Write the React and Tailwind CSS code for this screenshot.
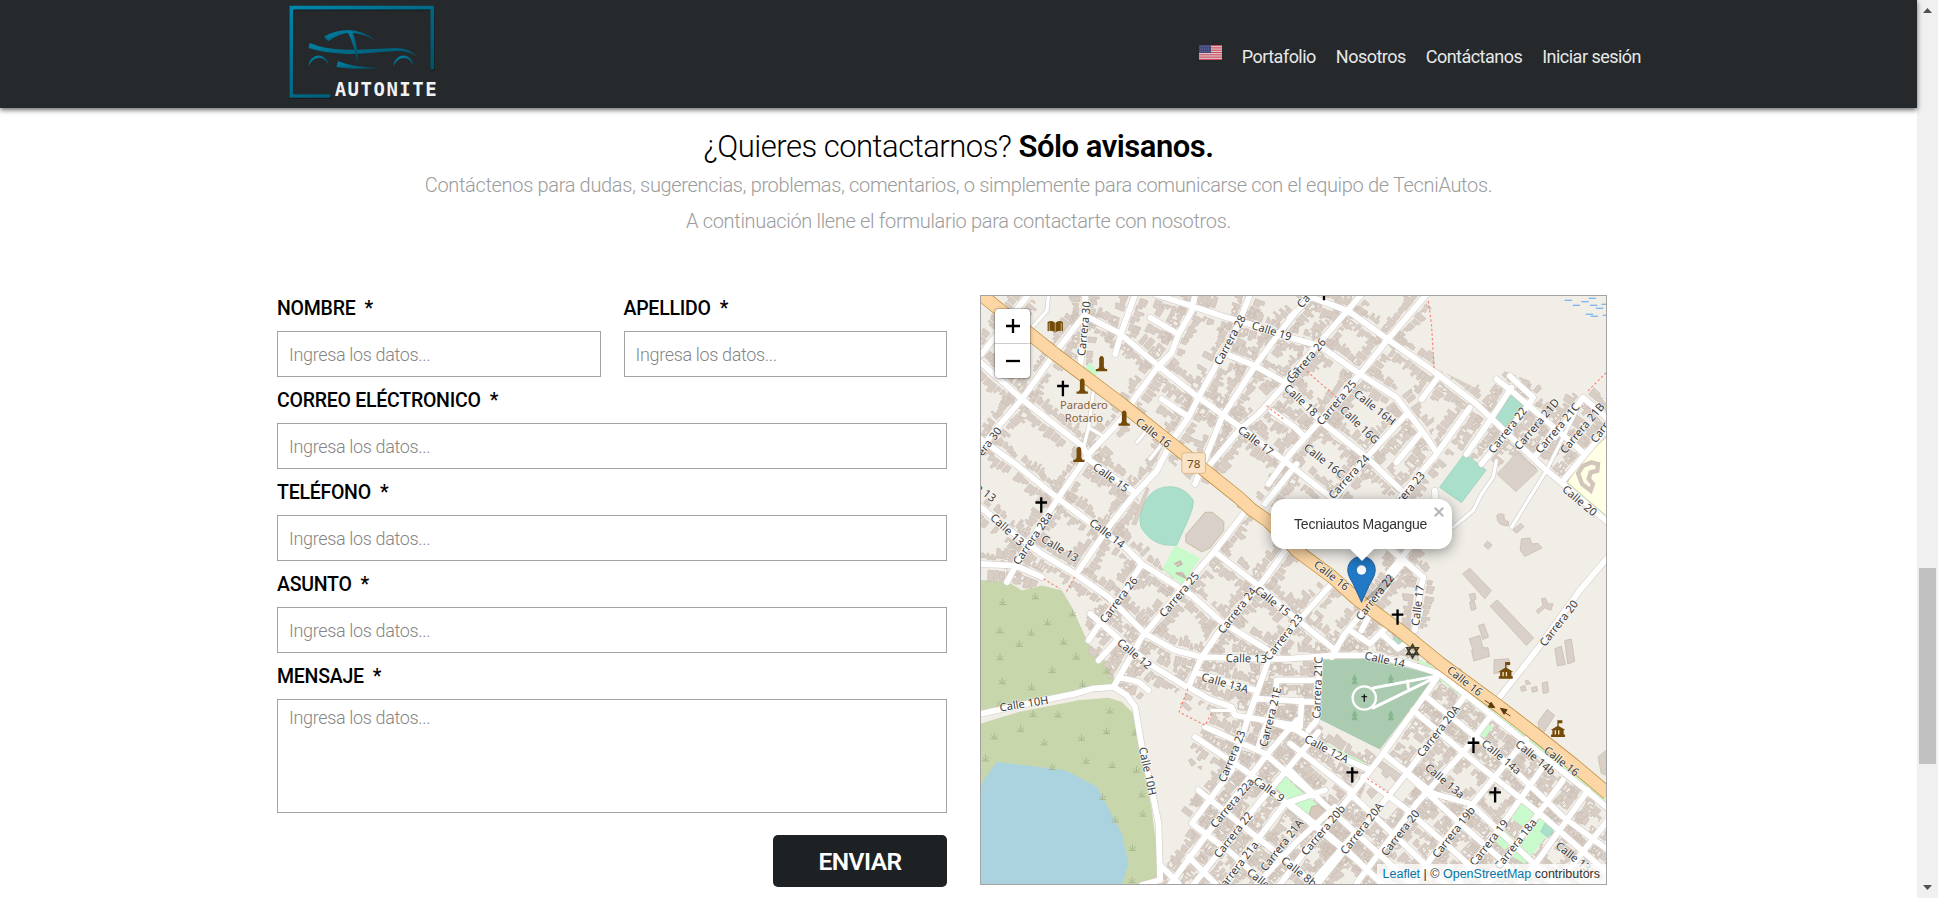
import React from "react";

const streets = [
  "M160 10L18 190", "M325 75L240 185L140 325L75 400L10 480", "M330 10L325 130L315 225",
  "M330 75L430 125L550 225L670 320L790 405L935 515L1055 610L1120 660",
  "M480 10L440 120L420 190", "M660 10L650 60L610 130L590 185L550 225L480 320L440 385L340 490L250 620L140 790L95 875",
  "M525 80L610 130", "M540 10L650 45L740 75L860 110L945 140L1035 165L1155 250L1265 320L1345 425L1385 485",
  "M825 10L790 100L725 220L670 320L640 380L590 450L545 540L470 620L400 710L310 840",
  "M965 60L910 130L840 225L740 380L660 580", "M755 190L840 225L930 275", "M940 270L850 370L790 420L690 540",
  "M560 325L635 375", "M890 360L960 410L990 440", "M945 290L1035 390L1175 500L1275 595", "M10 210L140 325L320 465L345 510L480 605",
  "M10 440L120 520L250 625L350 700L450 770L500 820L610 890L650 915L740 995L880 1080",
  "M10 645L90 710L200 790L300 850L400 920L510 1030L600 1080L680 1100L870 1105L945 1105L1075 1095L1195 1095L1285 1115L1395 1150",
  "M10 820L120 825L200 860", "M820 650L720 780L625 890L500 1040L415 1190", "M500 820L450 900L380 990L340 1050",
  "M720 785L850 885L945 970L1075 1075", "M960 740L850 890L745 1005L680 1100L640 1190",
  "M1070 880L945 1020L880 1110L845 1210L820 1280L770 1440L650 1600", "M345 970L430 1045L530 1125L635 1190", "M430 1045L370 1110",
  "M430 1160L490 1175L520 1200", "M660 1145L740 1170L840 1200", "M640 1190L700 1225L770 1250L780 1275L840 1285L960 1305",
  "M845 1225L1015 1235", "M905 1170L1025 1170", "M905 1170L900 1230L850 1370", "M690 1310L870 1390L960 1470L1010 1510",
  "M660 1340L830 1455L960 1560L1145 1710L1230 1790", "M670 1500L850 1645L960 1730L1020 1790", "M650 1600L770 1690L880 1790", "M560 1730L610 1780", "M640 1700L730 1790",
  "M965 1290L870 1400L690 1640L580 1790", "M1030 1325L960 1410L850 1540L650 1790", "M1050 1500L930 1540L850 1645L740 1790", "M1080 1550L960 1660L840 1790", "M1140 1630L1000 1790",
  "M1385 1165L1225 1390L1125 1520L985 1690L910 1790", "M1475 1210L1295 1450L1030 1780", "M1545 1280L1470 1380L1325 1540L1145 1780",
  "M1655 1345L1495 1540L1365 1710L1310 1790", "M1705 1430L1585 1600L1440 1790", "M1840 1500L1705 1690L1630 1790", "M1900 1590L1765 1760", "M1765 1470L1625 1660L1530 1790",
  "M1395 1150L1545 1270L1835 1500L1900 1555", "M1355 1220L1565 1390L1765 1580L1900 1680", "M1315 1260L1505 1420L1695 1570L1900 1750",
  "M1225 1390L1375 1510L1485 1540L1645 1690L1740 1780", "M1295 1450L1445 1590L1570 1700L1660 1790", "M1165 1460L1285 1550L1445 1690L1550 1790", "M1125 1510L1295 1670L1420 1790", "M945 1360L1125 1500",
  "M945 1440L1045 1540L1265 1740L1320 1790", "M945 1540L1115 1680L1220 1780", "M885 1295L965 1320L1095 1400L1185 1440",
  "M1290 810L1110 1030L1070 1100", "M1125 1020L1185 1060L1235 1010", "M1190 960L1160 1020", "M1220 1030L1270 1075L1320 1040", "M1240 770L1345 860L1335 910L1320 1020",
  "M980 1230L975 1310", "M1035 1110L1025 1290L1000 1320", "M1355 10L1235 150L1155 250L1035 390L945 490L880 580", "M1160 10L1025 165L930 275",
  "M985 10L1120 60L1245 150L1375 240L1505 340L1705 530L1765 580L1900 695", "M1015 10L945 80", "M1385 265L1340 325", "M1295 370L1175 500L1065 640",
  "M1335 430L1265 515", "M1485 350L1385 490L1275 620", "M1610 290L1545 390L1475 490", "M1565 265L1610 300L1830 490", "M1605 255L1675 320L1660 345L1520 520",
  "M1735 420L1680 500", "M1900 410L1765 570", "M1825 320L1900 385", "M1825 320L1740 440", "M965 520L870 640", "M1330 740L1240 850",
];
const plainRoads = [
  "M10 1272L130 1245L300 1210L350 1195L415 1190L455 1215L480 1250L500 1370L530 1500L550 1600L555 1770L500 1785",
  "M1900 800L1815 900L1685 1080L1575 1220", "M1380 600L1382 650",
];
const lanes = [
  "M220 10L215 60L165 115", "M355 300L340 410L325 470", "M340 410L390 440", "M525 505L560 460", "M485 455L510 425",
  "M1825 320L1715 540L1610 710", "M1565 510L1555 560L1520 610L1495 660L1435 710", "M710 1260L770 1260",
];

function makeBuildings() {
  let seed = 7919;
  const rnd = () => ((seed = (seed * 16807) % 2147483647) / 2147483647);
  const out = [];
  streets.forEach((d) => {
    const p = d.slice(1).split("L").map((s) => s.split(" ").map(Number));
    for (let i = 1; i < p.length; i++) {
      const [x0, y0] = p[i - 1];
      const dx = p[i][0] - x0;
      const dy = p[i][1] - y0;
      const len = Math.hypot(dx, dy);
      const ux = dx / len;
      const uy = dy / len;
      for (const side of [-1, 1]) {
        let t = 6;
        while (t < len - 14) {
          const w = 9 + rnd() * 12;
          if (rnd() > 0.12) {
            const near = 14 + rnd() * 6;
            const far = near + 12 + rnd() * 22;
            const pt = (a, b) => (x0 + ux * a - uy * b * side).toFixed(0) + " " + (y0 + uy * a + ux * b * side).toFixed(0);
            const q = far - rnd() * 12;
            out.push("M" + pt(t, near) + "L" + pt(t + w, near) + "L" + pt(t + w, q) + "L" + pt(t + w / 2, q) + "L" + pt(t + w / 2, far) + "L" + pt(t, far) + "Z");
          }
          t += w + 2 + rnd() * 3;
        }
      }
    }
  });
  return out.join("");
}
const buildings = makeBuildings();

const labels = [
  ["Carrera 30", 326, 113, -84], ["Calle 19", 890, 120, 17], ["Carrera 28", 764, 147, -62], ["Calle 16", 535, 426, 38], ["Calle 17", 842, 450, 37],
  ["Calle 15", 407, 560, 36], ["Calle 14", 396, 728, 37], ["Calle 13", 96, 717, 43], ["Calle 13", 254, 773, 31], ["Carrera 28a", 172, 743, -56],
  ["era 30", 42, 452, -52], ["a 13", 32, 606, 38], ["Ca", 955, 245, -50], ["Calle 18", 978, 328, 43], ["Carrera 26", 993, 210, -50], ["Ca", 985, 30, -50],
  ["Carrera 25", 1084, 335, -50], ["Calle 16H", 1200, 350, 38], ["Calle 16G", 1154, 402, 44], ["Calle 16C", 1048, 510, 38], ["Carrera 24", 1122, 558, -48],
  ["Carrera 23", 1290, 610, -50], ["Carrera 22", 1598, 418, -52], ["Carrera 21D", 1686, 400, -50], ["Carrera 21C", 1748, 412, -50], ["Carrera 21B", 1822, 412, -50],
  ["Carrera", 1890, 405, -53], ["Calle 20", 1815, 630, 40], ["Calle 16", 1070, 855, 38], ["Carrera 22", 1200, 920, -52], ["Calle 17", 1328, 945, -83],
  ["Carrera 26", 430, 928, -53], ["Carrera 25", 612, 912, -50], ["Carrera 24", 786, 960, -52], ["Calle 15", 893, 932, 38], ["Carrera 23", 925, 1040, -52],
  ["Calle 12", 478, 1090, 40], ["Calle 13", 814, 1104, 1], ["Calle 13A", 750, 1178, 16], ["Calle 10H", 146, 1240, -9], ["Calle 10H", 518, 1443, 78],
  ["Carrera 21E", 886, 1280, -76], ["Carrera 23", 770, 1398, -68], ["Calle 9", 882, 1498, 35], ["Carrera 22a", 771, 1538, -50], ["Carrera 22", 774, 1634, -52],
  ["Carrera 21a", 786, 1730, -52], ["Carrera 21A", 920, 1665, -52], ["Calle", 850, 1765, 38], ["Calle 8b", 972, 1745, 38],
  ["Carrera 21C", 1027, 1192, -88], ["Calle 14", 1230, 1108, 12], ["Calle 12A", 1055, 1376, 28], ["Carrera 20A", 1390, 1322, -52], ["Calle 16", 1470, 1172, 38],
  ["Carrera 20", 1752, 998, -52], ["Calle 14a", 1580, 1400, 40], ["Calle 14b", 1682, 1402, 40], ["Calle 16", 1761, 1413, 38], ["Calle 13a", 1410, 1472, 40],
  ["Carrera 20b", 1044, 1620, -50], ["Carrera 20A", 1160, 1615, -52], ["Carrera 20", 1276, 1628, -52], ["Carrera 19b", 1436, 1626, -52], ["Carrera 19", 1542, 1658, -52],
  ["Carrera 18a", 1622, 1662, -52], ["Calle 13", 1796, 1700, 38],
];
const crosses = [[263, 293, 1], [198, 643, 1], [1268, 980, 1], [1496, 1365, 1], [1132, 1454, 1], [1561, 1514, 1], [1168, 1223, 0.5], [1047, 5, 1]];
const monuments = [[379, 218], [321, 286], [447, 382], [311, 491]];
const tufts = [[82, 934], [180, 917], [217, 995], [74, 1019], [168, 1026], [292, 968], [132, 1060], [265, 1053], [74, 1100], [303, 1098], [231, 1138], [395, 1140], [81, 1172], [169, 1190], [322, 1180], [74, 1240], [173, 1270], [248, 1272], [404, 1260], [136, 1315], [57, 1338], [207, 1356], [319, 1342], [394, 1322], [480, 1326], [30, 1404], [333, 1411], [411, 1424], [231, 1430], [484, 1438], [500, 1512], [503, 1570], [382, 1520], [420, 1588], [472, 1673], [470, 1770]];
const houses = [
  "M1546 947L1567 928L1677 1043L1655 1065Z", "M1463 850L1485 833L1550 900L1530 925Z", "M1483 1045L1515 1035L1525 1072L1540 1072L1544 1098L1497 1112L1490 1080L1494 1078Z", "M1511 1005L1527 1000L1541 1040L1524 1047Z",
  "M1740 1075L1760 1067L1772 1122L1748 1127Z", "M1770 1050L1790 1046L1800 1113L1779 1121Z", "M1690 1295L1718 1257L1740 1275L1705 1330L1692 1320Z", "M1558 1108L1602 1105L1606 1120L1585 1145L1557 1150Z",
  "M1566 675Q1570 665 1588 672Q1585 690 1602 693L1600 706Q1565 705 1566 675Z", "M1614 718L1638 698L1648 708L1625 728Z", "M1527 765L1538 752L1552 763L1540 776Z", "M1640 745L1665 742L1672 760L1690 758L1702 772L1650 798L1636 778Z",
  "M1483 912L1500 908L1504 925L1490 932Z", "M1484 935L1498 930L1504 955L1490 960Z", "M1637 1190L1650 1185L1655 1200L1640 1203Z", "M1651 1172L1660 1170L1668 1180L1655 1183Z", "M1670 1192L1686 1188L1688 1202L1673 1206Z", "M1702 1178L1718 1174L1722 1205L1706 1210Z",
  "M1685 960L1705 945L1700 925L1712 922L1720 940L1735 940L1728 960L1710 952L1690 970Z", "M1895 1380L1870 1400L1880 1450L1895 1455Z", "M615 1240L630 1235L650 1255L640 1262Z", "M640 1410L650 1405L662 1420L650 1428Z", "M668 1430L680 1428L678 1438Z",
];
const dashes = [[1770, 28], [1794, 43], [1820, 32], [1842, 22], [1846, 43], [1864, 52], [1884, 73], [1848, 76], [1833, 70], [1880, 40]];

const CityMap = () => (
  <svg className="block h-full w-full" viewBox="17 15 1877 1767" preserveAspectRatio="none">
    <rect width="1950" height="1900" fill="#f1eee8" />
    <path d="M10 868L100 875L140 900L200 885L260 900L290 950L340 1060L410 1130L420 1180L350 1190L300 1205L130 1235L10 1270Z" fill="#c7d6ab" />
    <path d="M10 1302L130 1265L310 1230L400 1222L440 1235L475 1270L500 1400L530 1560L545 1680L545 1790L10 1790Z" fill="#c7d6ab" />
    <path d="M10 1530L24 1470L65 1415L270 1440L365 1490L440 1630L460 1720L438 1790L10 1790Z" fill="#abd3df" />
    <path d={buildings} fill="#d9cec6" stroke="#c9bcb2" strokeWidth="2" />
    <g fill="#f1eee8">
      <path d="M520 580L575 505L640 565L810 665L700 790L625 885L560 830L480 600Z" />
      <path d="M1370 20L1895 20L1895 230L1830 300L1760 310L1640 260L1560 230L1500 290L1380 230Z" />
      <path d="M1400 600L1520 500L1590 540L1700 545L1760 590L1890 710L1890 790L1460 790Z" />
    </g>
    <path d="M1900 435L1830 495L1778 575L1900 680Z" fill="#ffffe5" stroke="#c9c789" strokeWidth="2" />
    <g fill="#c8facc">
      <path d="M600 763L675 803L620 882L562 835Z" /><path d="M345 215L370 245L355 260L325 235Z" />
      <path d="M945 1475L1065 1575L1040 1612L900 1492L925 1450Z" /><path d="M1320 1100L1395 1140L1895 1520L1895 1545L1330 1120Z" />
      <path d="M1640 1535L1686 1567L1655 1615L1610 1585Z" /><path d="M1700 1580L1738 1610L1650 1722L1612 1700Z" /><path d="M1590 1620L1620 1650L1590 1680L1562 1655Z" />
      <path d="M1530 1300L1555 1310L1530 1343L1512 1332Z" /><path d="M955 1310L1175 1420L1160 1440L1090 1395L960 1325Z" />
    </g>
    <g fill="#aae0cb" stroke="#93cdb7" strokeWidth="2">
      <path d="M515 625C530 600 555 588 585 588C615 588 640 605 655 630Q655 655 640 685L605 763C560 770 520 750 498 710Q485 670 515 625Z" />
      <path d="M1610 312L1644 345L1585 417L1554 393Z" /><path d="M1470 488L1534 538L1460 636L1394 590Z" /><path d="M1262 1040L1280 1055L1265 1070L1250 1055Z" /><path d="M1712 1597L1738 1620L1720 1643L1698 1625Z" />
    </g>
    <path d="M690 665L712 665L746 693V720L705 772L680 784L632 755V733Z" fill="#d9d0c9" stroke="#c5c0a0" strokeWidth="3" />
    <path d="M1628 485L1690 540L1623 603L1566 550Z" fill="#d9d0c9" stroke="#cbbfb4" strokeWidth="2" />
    <path d="M515 590L522 595L482 703L470 700Z" fill="#d9d0c9" stroke="#cbbfb4" strokeWidth="2" />
    <path d="M1045 1107L1195 1105L1385 1155L1215 1378L1035 1288Z" fill="#aacbaf" />
    <path d="M1200 1415L1225 1405L1285 1440L1330 1480L1235 1590L1150 1540Z" fill="#f1eee8" />
    <g fill="#d9d0c9" stroke="#c5b6ab" strokeWidth="2">
      {houses.map((d) => <path key={d} d={d} />)}
      <path d="M1205 1425L1220 1412L1280 1455L1262 1475L1245 1455L1235 1465L1220 1450L1225 1440Z" /><path d="M1175 1505L1195 1485L1212 1502L1190 1525Z" />
    </g>
    <path d="M1850 515L1870 520L1868 540L1848 545L1842 565L1855 580L1848 600L1822 580L1810 548L1825 525Z" fill="none" stroke="#d2c6bb" strokeWidth="13" />
    <path d="M1010 1550L1030 1545L1055 1565L1045 1598L1020 1590L1003 1572Z" fill="#d9c8be" stroke="#c5b6ab" strokeWidth="3" />
    <path d="M598 820L615 812L620 820L605 828M622 848L632 862L602 848Z" fill="#d9d0c9" stroke="#c5b6ab" strokeWidth="5" />
    <g fill="none" stroke="#aab892" strokeWidth="3">
      {tufts.map(([x, y]) => <path key={x + "-" + y} d={`M${x - 11} ${y + 8}h22M${x} ${y + 7}v-17M${x - 2} ${y + 6}l-7 -9M${x + 2} ${y + 6}l7 -9`} />)}
    </g>
    <g fill="#86b68e">{[[1139, 1165], [1248, 1165], [1139, 1273], [1248, 1273]].map(([x, y]) => <path key={x + "-" + y} d={`M${x} ${y - 14}l9 18h-5l6 13h-20l6 -13h-5z`} />)}</g>
    <g fill="none" strokeLinecap="round" strokeLinejoin="round">
      <g stroke="#d3cdc8"><path d={streets.join("") + plainRoads.join("")} strokeWidth="21" /><path d={lanes.join("")} strokeWidth="14" /></g>
      <g stroke="#fff"><path d={streets.join("") + plainRoads.join("")} strokeWidth="17.5" /><path d={lanes.join("")} strokeWidth="10" />
        <path d="M1195 1193L1395 1155L1195 1253M1298 1172L1300 1192" strokeWidth="9" /><circle cx="1168" cy="1223" r="35" strokeWidth="7" />
      </g>
      <g strokeLinecap="butt">
        <path d="M10 5L100 78L240 190L320 250L440 340L590 460L700 548L790 620L830 657L880 692L965 780L1070 858L1145 925L1275 1020L1395 1118L1575 1250L1685 1335L1795 1422L1900 1510" stroke="#bf9040" strokeWidth="41" />
        <path d="M10 5L100 78L240 190L320 250L440 340L590 460L700 548L790 620L830 657L880 692L965 780L1070 858L1145 925L1275 1020L1395 1118L1575 1250L1685 1335L1795 1422L1900 1510" stroke="#fcd6a4" strokeWidth="36.500" />
      </g>
      <path d="M1360 30L1370 100L1378 240M1840 300L1895 245M985 232L1085 320M875 345L925 385M205 865L255 895M298 860L270 910M638 1195L612 1265L690 1305L712 1265M1177 1465L1240 1508M1328 1090L1330 1120" stroke="#fa8072" strokeWidth="3.5" strokeLinecap="butt" strokeDasharray="7 7" />
    </g>
    <g stroke="#7db7ee" strokeWidth="4">{dashes.map(([x, y]) => <path key={x + "-" + y} d={`M${x} ${y}h22`} />)}</g>
    <g fill="#734a08">
      {monuments.map(([x, y]) => <path key={x} d={`M${x - 17} ${y + 23}v-7h6l4 -6v-26q2 -7 7 -7t7 7v26l4 6h6v7z`} />)}
      <path d="M217 93q14 -7 23 3q9 -10 23 -3v28q-14 -5 -23 4q-9 -9 -23 -4z" /><path d="M240 96v28M222 96v27M258 96v27" stroke="#e9d9bd" strokeWidth="2" />
      {[[1592, 1145], [1749, 1320]].map(([x, y]) => <g key={x}><path d={`M${x - 20} ${y + 20}v-7h4v-14h-5l20 -12v-17h15v9h-11v8l20 12h-5v14h4v7z`} /><path d={`M${x - 9} ${y + 13}v-13h4v13M${x + 5} ${y + 13}v-13h-4v13`} fill="#f6e4c6" /></g>)}
    </g>
    <g fill="#000">{crosses.map(([x, y, k]) => <path key={x + "-" + y} transform={`translate(${x} ${y}) scale(${k})`} d="M-3.5 -23h7v12h14v7h-14v27h-7v-27h-14v-7h14z" />)}</g>
    <path d="M1313 1063L1330 1092H1296ZM1313 1102L1330 1072H1296Z" fill="none" stroke="#3a3a2a" strokeWidth="5" />
    <g stroke="#5c3b0c" strokeWidth="3" fill="#5c3b0c"><path d="M1530 1230L1552 1245" /><path d="M1560 1252L1540 1250L1549 1236Z" /><path d="M1607 1277L1585 1264" /><path d="M1577 1254L1597 1258L1588 1272Z" /></g>
    <rect x="620" y="486" width="71" height="62" rx="7" fill="#f9e2c5" stroke="#dcb98d" strokeWidth="3" />
    <g fontFamily="'Noto Sans', 'Open Sans', sans-serif" textAnchor="middle">
      <text x="656" y="532" fontSize="35" fill="#6b4a1a">78</text>
      <g fontSize="33.5" fill="#85633a" stroke="#f4efe8" strokeWidth="4" paintOrder="stroke"><text x="326" y="354">Paradero</text><text x="326" y="394">Rotario</text></g>
      <g fontSize="33.500" fill="#3c3c3c" stroke="#fff" strokeOpacity="0.6" strokeWidth="5" strokeLinejoin="round" paintOrder="stroke">
        {labels.map(([t, x, y, a]) => <text key={t + x} transform={`translate(${x} ${y}) rotate(${a})`} y="12">{t}</text>)}
      </g>
    </g>
  </svg>
);

const Popup = () => (
  <div className="absolute left-[290px] top-[203px] flex w-[181px] flex-col items-center drop-shadow-[0_3px_7px_rgba(0,0,0,0.4)]">
    <div className="relative flex h-[50px] w-full items-center rounded-[14px] bg-white pl-[23px] font-['Liberation_Sans',sans-serif] text-[14px] tracking-[-0.2px] text-[#333]">
      Tecniautos Magangue
      <svg className="absolute right-[8px] top-[8px] h-[10px] w-[10px]" viewBox="0 0 10 10" stroke="#b8b8b8" strokeWidth="2.2"><path d="M.7.7 9.3 9.3M9.3.7.7 9.3" /></svg>
    </div>
    <svg className="block h-3 w-6" viewBox="0 0 24 12"><path d="M0 0h24L12 12z" fill="#fff" /></svg>
  </div>
);

const Marker = () => (
  <svg className="absolute left-[366px] top-[260px] h-[47px] w-[50px] overflow-visible" viewBox="0 0 50 47">
    <path d="M16 46L38 22q10 -5 8 3q-3 7 -16 14z" fill="#000" opacity=".25" />
    <path d="M14.500 .6A13.600 13.600 0 0 0 .8 14c0 6 3 9 5.500 14L14.500 46l8.200-18c2.500-5 5.500-8 5.500-14A13.600 13.600 0 0 0 14.500 .6z" fill="#2279c6" stroke="#2568a5" strokeWidth="1.100" />
    <circle cx="14.500" cy="14" r="4.700" fill="#fff" />
  </svg>
);

const Logo = () => (
  <svg className="block h-[108px] w-[160px]" viewBox="0 0 480 324">
    <defs><linearGradient id="teal" x1="0" y1="0" x2="1" y2="1"><stop offset="0" stopColor="#0086ad" /><stop offset="1" stopColor="#004a5c" /></linearGradient></defs>
    <g transform="translate(-30 0)">
      <path d="M177 288H64V23H487V204" fill="none" stroke="#15191b" strokeWidth="13" strokeLinecap="round" transform="translate(1 2)" />
      <path d="M177 288H64V23H487V204" fill="none" stroke="url(#teal)" strokeWidth="11" strokeLinecap="round" />
      <g fill="url(#teal)">
        <path d="M162 110Q195 90 235 90Q285 92 320 125Q285 99 240 98Q205 100 175 124Z" />
        <path d="M119 129Q160 147 225 149C285 150 330 145 380 144Q420 145 442 170Q415 152 380 153C330 155 280 163 225 162Q155 158 116 144Z" />
        <path d="M233 95L246 93Q266 140 262 192Q255 140 233 95Z" /><path d="M204 184Q250 202 328 204Q250 210 199 201Z" />
        <path d="M115 202C118 155 173 155 177 202C167 165 129 165 115 202Z" /><path d="M370 202C373 155 428 155 431 202C421 165 383 165 370 202Z" />
      </g>
      <text x="194" y="288" fontFamily="'DejaVu Sans Mono', monospace" fontWeight="700" fontSize="57" letterSpacing="4.500" fill="#f2f2f2">AUTONITE</text>
    </g>
  </svg>
);

const Flag = () => (
  <svg className="mt-[-9px] h-[15px] w-[23px]" viewBox="0 0 23 15">
    <rect width="23" height="15" rx="1" fill="#e6cdd1" />
    {[0, 1, 2, 3, 4, 5, 6].map((i) => <rect key={i} y={i * 2.31} width="23" height="1.150" fill="#c74b5c" />)}
    <rect width="12" height="8" fill="#44497a" />
    {[1.5, 4, 6.5].map((y) => <path key={y} d={`M1 ${y}H11.500`} stroke="#7b80a8" strokeWidth=".7" strokeDasharray=".8 1.200" />)}
  </svg>
);

const Label = ({ children }) => (
  <div className="flex h-[46px] items-center whitespace-pre pt-[2px] text-[19.5px] font-medium tracking-[-0.25px] text-black">{children}<span className="ml-[9px]">*</span></div>
);
const inputClass = "block h-[46px] w-full border border-[#a3a3a3] bg-white px-[11px] text-[18px] font-light tracking-[-0.35px] text-black placeholder:text-[#858585] outline-none";
const Field = ({ label }) => (
  <label className="block"><Label>{label}</Label><input className={inputClass} placeholder="Ingresa los datos..." /></label>
);

export default function App() {
  return (
    <div className="flex h-[898px] w-[1938px] overflow-hidden bg-white font-['Roboto',sans-serif]">
      <div className="w-[1917px] shrink-0">
        <header className="relative flex h-[108px] items-center justify-between bg-[#25292c] pl-[280px] pr-[276px] shadow-[0_2px_5px_rgba(0,0,0,0.6)]">
          <Logo />
          <nav className="flex items-center gap-5 pt-[5px] text-[18px] tracking-[-0.52px] text-[#e8e8e8]">
            <Flag /><a>Portafolio</a><a>Nosotros</a><a>Contáctanos</a><a>Iniciar sesión</a>
          </nav>
        </header>
        <main className="pt-[19px]">
          <h1 className="text-center text-[31px] font-light leading-[40px] tracking-[-0.5px] text-black">¿Quieres contactarnos? <b className="font-semibold">Sólo avisanos.</b></h1>
          <div className="text-center text-[20px] font-light leading-9 tracking-[-0.33px] text-[#9c9c9c]">
            <p>Contáctenos para dudas, sugerencias, problemas, comentarios, o simplemente para comunicarse con el equipo de TecniAutos.</p>
            <p>A continuación llene el formulario para contactarte con nosotros.</p>
          </div>
          <div className="mt-[46px] flex gap-[33px] pl-[277px]">
            <form className="w-[670px]">
              <div className="grid grid-cols-2 gap-x-[23px]"><Field label="NOMBRE" /><Field label="APELLIDO" /></div>
              <Field label="CORREO ELÉCTRONICO" />
              <Field label="TELÉFONO" />
              <Field label="ASUNTO" />
              <label className="block"><Label>MENSAJE</Label>
                <textarea className="block h-[114px] w-full resize-none border border-[#a3a3a3] px-[11px] pt-[4px] text-[18px] font-light tracking-[-0.35px] outline-none placeholder:text-[#858585]" placeholder="Ingresa los datos..." />
              </label>
              <div className="mt-[22px] flex justify-end"><button type="button" className="h-[52px] w-[174px] rounded-[5px] bg-[#1d2124] pt-[2px] text-[24.5px] font-semibold tracking-[-0.5px] text-white">ENVIAR</button></div>
            </form>
            <div className="relative mt-[10px] h-[590px] w-[627px] overflow-hidden border border-[#a3a3a3]">
              <CityMap />
              <Marker />
              <Popup />
              <div className="absolute left-[14px] top-[13px] flex h-[69px] w-[35px] flex-col rounded-[4px] bg-white shadow-[0_0_0_1px_rgba(0,0,0,0.16),0_1px_4px_rgba(0,0,0,0.35)]">
                <button type="button" className="flex h-[35px] items-center justify-center border-b border-[#ccc]"><svg className="h-[14px] w-[14px]" viewBox="0 0 14 14" stroke="#000" strokeWidth="2.300"><path d="M7 0v14M0 7h14" /></svg></button>
                <button type="button" className="flex h-[34px] items-center justify-center"><svg className="h-[14px] w-[14px]" viewBox="0 0 14 14" stroke="#000" strokeWidth="2.300"><path d="M0 7h14" /></svg></button>
              </div>
              <div className="absolute bottom-0 right-0 whitespace-nowrap bg-white/75 px-[6px] font-['Liberation_Sans',sans-serif] text-[12.5px] leading-[20px] text-[#333]">
                <a className="text-[#0078a8]">Leaflet</a> | © <a className="text-[#0078a8]">OpenStreetMap</a> contributors
              </div>
            </div>
          </div>
        </main>
      </div>
      <div className="flex w-[21px] flex-col items-center bg-[#f0f0f0]">
        <svg className="mt-2 h-[5px] w-[9px] shrink-0" viewBox="0 0 9 5"><path d="M4.500 0L9 5H0z" fill="#505050" /></svg>
        <div className="mt-[555px] h-[196px] w-[17px] bg-[#c1c1c1]" />
        <svg className="mt-[121px] h-[5px] w-[9px] shrink-0" viewBox="0 0 9 5"><path d="M4.500 5L9 0H0z" fill="#505050" /></svg>
      </div>
    </div>
  );
}
